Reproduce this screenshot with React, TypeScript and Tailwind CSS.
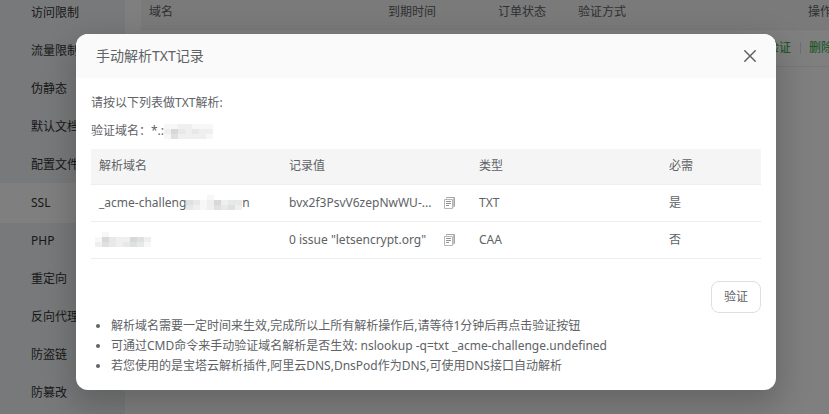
import React from 'react';

const menuItems = [
  '访问限制',
  '流量限制',
  '伪静态',
  '默认文档',
  '配置文件',
  'SSL',
  'PHP',
  '重定向',
  '反向代理',
  '防盗链',
  '防篡改',
];

const records = [
  { value: 'bvx2f3PsvV6zepNwWU-...', type: 'TXT', required: '是' },
  { value: '0 issue "letsencrypt.org"', type: 'CAA', required: '否' },
];

const tips = [
  '解析域名需要一定时间来生效,完成所以上所有解析操作后,请等待1分钟后再点击验证按钮',
  '可通过CMD命令来手动验证域名解析是否生效: nslookup -q=txt _acme-challenge.undefined',
  '若您使用的是宝塔云解析插件,阿里云DNS,DnsPod作为DNS,可使用DNS接口自动解析',
];

// Hides part of a domain, each digit is the darkness of one tile
const Mosaic = ({ tiles }: { tiles: string[] }) => (
  <svg
    className="shrink-0"
    width={tiles[0].length * 7}
    height={tiles.length * 5}
    shapeRendering="crispEdges"
    aria-hidden="true"
  >
    {tiles.map((row, y) =>
      row.split('').map((level, x) => (
        <rect
          key={`${x}-${y}`}
          x={x * 7}
          y={y * 5}
          width="7"
          height="5"
          fill="#606266"
          fillOpacity={Number(level) * 0.05}
        />
      ))
    )}
  </svg>
);

const CopyIcon = () => (
  <svg width="12" height="12" viewBox="0 0 12 12" fill="none" aria-hidden="true">
    <path d="M2.5 1.5v-1h8v9h-2" stroke="#a3a5a8" />
    <path d="M9.5 1v9.5" stroke="#c4c5c7" />
    <path d="M.5 2.5h8v9h-8z" stroke="#b4b5b8" />
    <path d="M2 4.5h5M2 6.5h5M2 8.5h3" stroke="#909296" />
  </svg>
);

const CloseIcon = () => (
  <svg width="12" height="12" viewBox="0 0 12 12" fill="none" stroke="#606266" strokeWidth="1.5" aria-hidden="true">
    <path d="M.3.3l11.4 11.4M11.7.3L.3 11.7" />
  </svg>
);

const Sidebar = () => (
  <nav className="w-[125px] shrink-0 overflow-hidden bg-[#f0f2f5]">
    <ul className="-mt-[6px]">
      {menuItems.map((item) => (
        <li key={item} className="flex h-[38px] items-center">
          <a
            href="#"
            className={`-my-px flex h-10 w-full shrink-0 items-center pl-[31px] text-[#333] ${item === 'SSL' ? 'bg-white' : ''}`}
          >
            {item}
          </a>
        </li>
      ))}
    </ul>
  </nav>
);

const CertTable = () => (
  <table className="ml-4 w-[720px] shrink-0 table-fixed self-start text-left">
    <thead>
      <tr className="h-[29px] border-b border-[#ebeef5] bg-[#f5f5f5] align-top text-[#606266]">
        <th className="w-[239px] pt-1 pl-2 font-normal">域名</th>
        <th className="w-[110px] pt-1 pl-2 font-normal">到期时间</th>
        <th className="w-[80px] pt-1 pl-2 font-normal">订单状态</th>
        <th className="w-[230px] pt-1 pl-2 font-normal">验证方式</th>
        <th className="pt-1 pl-2 font-normal">操作</th>
      </tr>
    </thead>
    <tbody>
      <tr className="h-[37px] border-b border-[#ebeef5]">
        <td colSpan={3}></td>
        <td className="pr-[9px] text-right text-[#20a53a]">
          <a href="#">验证</a>
        </td>
        <td className="text-[#20a53a]">
          <a href="#" className="block border-l border-[#dcdfe6] pl-2 leading-3">删除</a>
        </td>
      </tr>
    </tbody>
  </table>
);

const RecordTable = () => (
  <table className="mt-2 w-full table-fixed text-left">
    <thead>
      <tr className="h-[35px] border-b border-[#ebeef5] bg-[#f5f5f5]">
        <th className="w-[190px] px-2 font-normal">解析域名</th>
        <th className="w-[190px] px-2 font-normal">记录值</th>
        <th className="w-[190px] px-2 font-normal">类型</th>
        <th className="px-2 font-normal">必需</th>
      </tr>
    </thead>
    <tbody>
      {records.map((record, i) => (
        <tr key={record.type} className="h-[37px] border-b border-[#ebeef5]">
          <td className="px-2">
            {i === 0 ? (
              <span className="flex items-center">
                _acme-challeng
                <Mosaic tiles={['00010000', '43125233', '32124342']} />n
              </span>
            ) : (
              <span className="-ml-1 flex items-center">
                <Mosaic tiles={['01000000', '15322542', '24323431']} />
              </span>
            )}
          </td>
          <td className="px-2">
            <span className="flex items-center">
              <span className="w-[155px] whitespace-nowrap">{record.value}</span>
              <button type="button" aria-label="复制">
                <CopyIcon />
              </button>
            </span>
          </td>
          <td className="px-2">{record.type}</td>
          <td className="px-2">{record.required}</td>
        </tr>
      ))}
    </tbody>
  </table>
);

const App = () => {
  return (
    <div className="relative h-screen overflow-hidden bg-white font-['Noto_Sans','Noto_Sans_CJK_SC',sans-serif] text-xs text-[#606266]">
      <div className="flex h-full">
        <Sidebar />
        <CertTable />
      </div>

      <div className="absolute inset-0 flex items-start justify-center bg-black/50 pt-[34px] pr-[53px] pl-[76px]">
        <div
          role="dialog"
          aria-labelledby="dialog-title"
          className="w-full overflow-hidden rounded-xl bg-white shadow-[0_12px_32px_4px_rgba(0,0,0,0.2)]"
        >
          <header className="flex h-11 items-center justify-between bg-[#fafafa] px-5">
            <h2 id="dialog-title" className="text-sm">手动解析TXT记录</h2>
            <button type="button" aria-label="关闭">
              <CloseIcon />
            </button>
          </header>

          <div className="px-[15px] pt-[15px] pb-[14px]">
            <p className="leading-5">请按以下列表做TXT解析:</p>
            <p className="mt-2 flex items-center leading-5">
              验证域名：*.:
              <Mosaic tiles={['1122111', '2532322', '1422221']} />
            </p>
            <RecordTable />
            <div className="mt-[22px] flex justify-end">
              <button type="button" className="h-8 rounded-lg border border-[#dcdfe6] px-3">
                验证
              </button>
            </div>
            <ul className="mt-[3px] list-disc pl-5 leading-5">
              {tips.map((tip) => (
                <li key={tip}>{tip}</li>
              ))}
            </ul>
          </div>
        </div>
      </div>
    </div>
  );
};

export default App;
